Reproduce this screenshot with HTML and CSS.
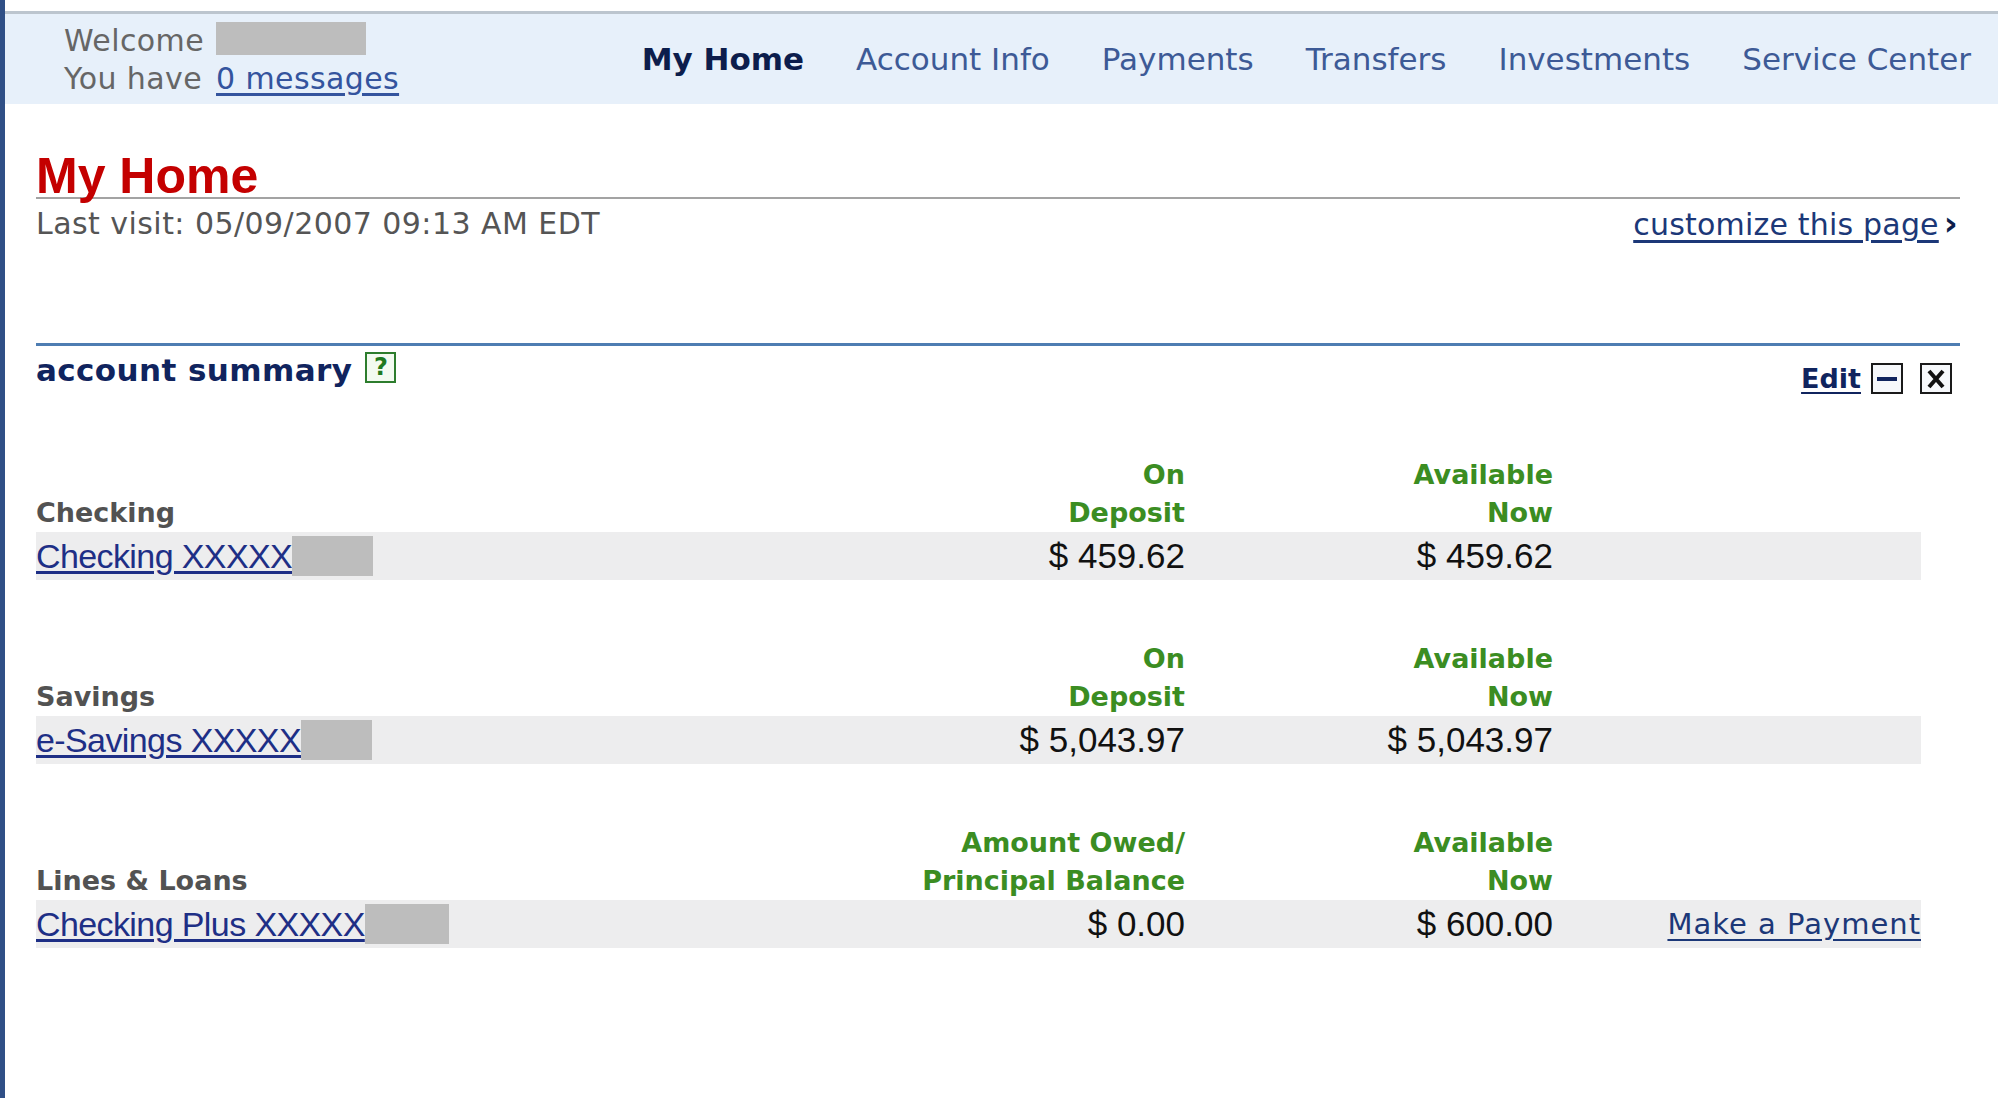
FILE: index.html
```html
<!DOCTYPE html>
<html lang="en">
<head>
<meta charset="utf-8">
<title>My Home</title>
<link rel="stylesheet" href="styles.css">
</head>
<body>
<div class="frame">
  <header class="topbar">
    <div class="welcome">
      <div class="welcome-line">Welcome <span class="redact redact-name"></span></div>
      <div class="welcome-line">You have <a href="#" class="msg-link">0 messages</a></div>
    </div>
    <nav class="nav">
      <a href="#" class="nav-item active">My Home</a>
      <a href="#" class="nav-item">Account Info</a>
      <a href="#" class="nav-item">Payments</a>
      <a href="#" class="nav-item">Transfers</a>
      <a href="#" class="nav-item">Investments</a>
      <a href="#" class="nav-item">Service Center</a>
    </nav>
  </header>

  <main class="content">
    <h1 class="page-title">My Home</h1>
    <div class="visit-row">
      <span class="last-visit">Last visit: 05/09/2007 09:13 AM EDT</span>
      <a href="#" class="customize"><span class="customize-text">customize this page</span><span class="chev">›</span></a>
    </div>

    <section class="summary">
      <div class="summary-head">
        <h2 class="summary-title">account summary <span class="help">?</span></h2>
        <div class="summary-tools">
          <a href="#" class="edit">Edit</a>
          <span class="tool-btn tool-min"><span class="min-bar"></span></span>
          <span class="tool-btn tool-close">
            <svg viewBox="0 0 22 22" width="22" height="22"><path d="M4 3 L18 19 M18 3 L4 19" stroke="#111" stroke-width="4" fill="none"/></svg>
          </span>
        </div>
      </div>

      <div class="group">
        <div class="acct-grid acct-head">
          <div class="cat">Checking</div>
          <div class="colh">On<br>Deposit</div>
          <div class="colh">Available<br>Now</div>
          <div></div>
        </div>
        <div class="acct-grid acct-row">
          <div class="acct-name"><a href="#" class="acct-link">Checking XXXXX</a><span class="redact redact-acct r1"></span></div>
          <div class="amt">$ 459.62</div>
          <div class="amt">$ 459.62</div>
          <div></div>
        </div>
      </div>

      <div class="group">
        <div class="acct-grid acct-head">
          <div class="cat">Savings</div>
          <div class="colh">On<br>Deposit</div>
          <div class="colh">Available<br>Now</div>
          <div></div>
        </div>
        <div class="acct-grid acct-row">
          <div class="acct-name"><a href="#" class="acct-link">e-Savings XXXXX</a><span class="redact redact-acct r2"></span></div>
          <div class="amt">$ 5,043.97</div>
          <div class="amt">$ 5,043.97</div>
          <div></div>
        </div>
      </div>

      <div class="group">
        <div class="acct-grid acct-head">
          <div class="cat">Lines &amp; Loans</div>
          <div class="colh">Amount Owed/<br>Principal Balance</div>
          <div class="colh">Available<br>Now</div>
          <div></div>
        </div>
        <div class="acct-grid acct-row">
          <div class="acct-name"><a href="#" class="acct-link">Checking Plus XXXXX</a><span class="redact redact-acct r3"></span></div>
          <div class="amt">$ 0.00</div>
          <div class="amt">$ 600.00</div>
          <div class="action"><a href="#" class="pay-link">Make a Payment</a></div>
        </div>
      </div>
    </section>
  </main>
</div>
</body>
</html>
```

FILE: styles.css
```css
* { box-sizing: border-box; }

html, body {
  margin: 0;
  padding: 0;
  background: #ffffff;
}

body {
  font-family: "DejaVu Sans", Verdana, sans-serif;
  color: #555;
}

a { text-decoration: none; }

.frame {
  min-height: 1098px;
  border-left: 5px solid #2f4f86;
  padding-top: 11px;
}

/* ---------- top bar ---------- */
.topbar {
  display: flex;
  align-items: center;
  height: 93px;
  border-top: 3px solid #bcc5ce;
  background: #e7f0fa;
  padding-left: 59px;
  padding-right: 27px;
}

.welcome {
  font-size: 30px;
  line-height: 38.5px;
  color: #666;
  margin-top: 2px;
  letter-spacing: 0.4px;
}

.welcome-line { white-space: nowrap; }

.redact {
  display: inline-block;
  background: #bdbdbd;
}

.redact-name {
  width: 150px;
  height: 33px;
  vertical-align: -4px;
  margin-left: 2px;
}

.msg-link {
  color: #34549e;
  text-decoration: underline;
  text-underline-offset: 4px;
  margin-left: 4px;
}

.nav {
  margin-left: auto;
  display: flex;
  gap: 52px;
  font-size: 31px;
}

.nav-item {
  color: #3d5a96;
  white-space: nowrap;
}

.nav-item.active {
  color: #0c1d4c;
  font-weight: bold;
}

/* ---------- content ---------- */
.content {
  padding: 0 38px 0 31px;
}

.page-title {
  margin: 52px 0 0;
  font-family: "Liberation Sans", Arial, sans-serif;
  font-size: 50px;
  line-height: 41px;
  font-weight: bold;
  color: #c40000;
  border-bottom: 2px solid #a3a3a3;
}

.visit-row {
  display: flex;
  justify-content: space-between;
  align-items: center;
  height: 48px;
  font-size: 30px;
}

.last-visit {
  color: #555;
  letter-spacing: 0.45px;
}

.customize {
  color: #1c3878;
  margin-right: 2px;
  letter-spacing: 0.2px;
}

.customize-text {
  text-decoration: underline;
  text-underline-offset: 5px;
}

.chev {
  font-weight: bold;
  font-size: 34px;
  margin-left: 5px;
  color: #0c1d4c;
}

/* ---------- summary ---------- */
.summary {
  margin-top: 96px;
  border-top: 3px solid #4e7db2;
}

.summary-head {
  display: flex;
  justify-content: space-between;
  align-items: flex-start;
  height: 50px;
}

.summary-title {
  margin: 0;
  font-size: 31px;
  line-height: 48px;
  font-weight: bold;
  color: #10245e;
  letter-spacing: 0.4px;
}

.help {
  display: inline-block;
  vertical-align: top;
  margin-top: 6px;
  margin-left: 2px;
  width: 31px;
  height: 31px;
  border: 2px solid #2d7d2d;
  background: #f3fbf1;
  color: #1f7a1f;
  font-size: 24px;
  line-height: 27px;
  font-weight: bold;
  text-align: center;
  letter-spacing: 0;
}

.summary-tools {
  display: flex;
  align-items: center;
  margin-top: 17px;
  margin-right: 8px;
}

.edit {
  font-size: 27px;
  font-weight: bold;
  color: #10245e;
  text-decoration: underline;
  text-underline-offset: 4px;
  margin-right: 10px;
}

.tool-btn {
  display: flex;
  align-items: center;
  justify-content: center;
  width: 32px;
  height: 31px;
  border: 2px solid #1a1a1a;
  background: #f6f8fb;
}

.tool-min { margin-right: 17px; }

.min-bar {
  display: block;
  width: 20px;
  height: 4px;
  background: #10245e;
}

/* ---------- account groups ---------- */
.group { margin-top: 60px; }

.acct-grid {
  display: grid;
  grid-template-columns: 1fr 290px 368px 368px;
  width: 1885px;
}

.acct-head {
  font-size: 27px;
  line-height: 38px;
  font-weight: bold;
}

.cat {
  align-self: end;
  color: #525252;
}

.colh {
  text-align: right;
  color: #3b8d22;
}

.acct-row {
  height: 48px;
  align-items: center;
  background: #ededee;
}

.acct-name {
  display: flex;
  align-items: center;
}

.acct-link {
  font-family: "Liberation Sans", Arial, sans-serif;
  font-size: 34px;
  letter-spacing: -0.6px;
  color: #1e2f86;
  text-decoration: underline;
  text-underline-offset: 3px;
  line-height: 44px;
}

.redact-acct { height: 40px; }
.r1 { width: 81px; }
.r2 { width: 71px; }
.r3 { width: 84px; }

.amt {
  text-align: right;
  font-family: "Liberation Sans", Arial, sans-serif;
  font-size: 35px;
  color: #111;
}

.action { text-align: right; }

.pay-link {
  font-size: 29px;
  letter-spacing: 1px;
  color: #1c3878;
  text-decoration: underline;
  text-underline-offset: 5px;
}
```
